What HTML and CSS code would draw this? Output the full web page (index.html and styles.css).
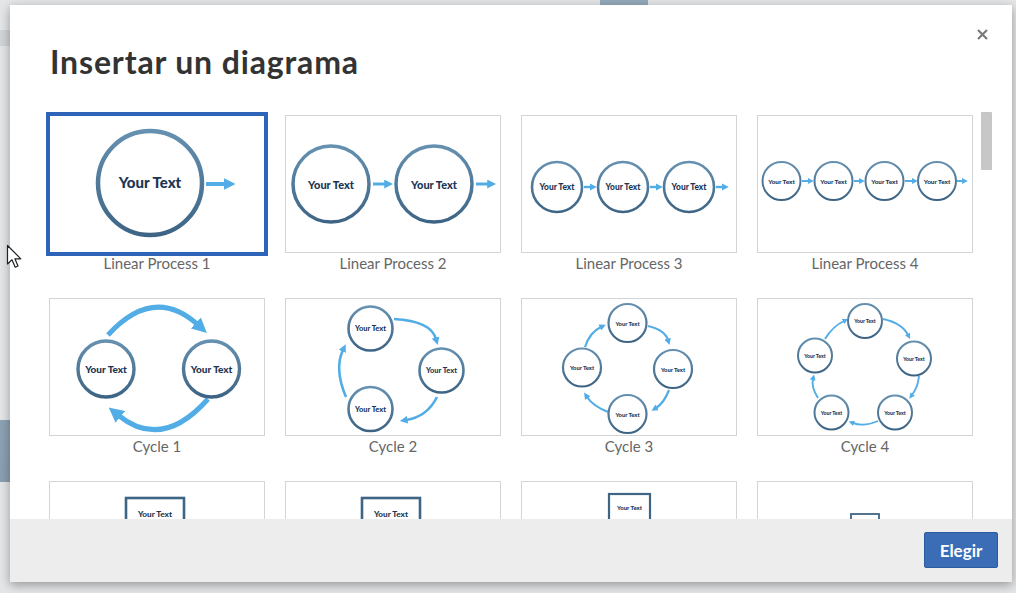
FILE: index.html
```html
<!DOCTYPE html>
<html lang="es">
<head>
    <meta charset="UTF-8">
    <title>Insertar un diagrama</title>
    <link rel="stylesheet" href="styles.css">
</head>
<body>
    <svg class="svg-defs" aria-hidden="true">
        <defs>
            <marker id="head" viewBox="0 0 10 10" refX="2" refY="5" markerWidth="3" markerHeight="3" orient="auto">
                <path d="M0,0 L10,5 L0,10 z" fill="#52ade6"/>
            </marker>
            <linearGradient id="ring" x1="0" y1="0" x2="0" y2="1">
                <stop offset="0" stop-color="#6590b0"/>
                <stop offset="1" stop-color="#3d6484"/>
            </linearGradient>
        </defs>
    </svg>

    <div class="modal">
        <header class="modal-head">
            <h1>Insertar un diagrama</h1>
            <button class="close" aria-label="Cerrar">
                <svg width="11" height="11" viewBox="0 0 11 11"><path d="M1 1 L10 10 M10 1 L1 10" stroke="#7a7a7a" stroke-width="2.2"/></svg>
            </button>
        </header>

        <div class="modal-body">
            <div class="grid">
                <!-- row 1: linear -->
                <div class="item">
                    <div class="thumb selected">
                        <svg viewBox="0 0 214 136" class="lp1">
                            <circle cx="100" cy="67" r="52" stroke-width="4.5"/>
                            <text x="100" y="66" font-size="15">Your Text</text>
                            <line x1="156" y1="68" x2="176" y2="68" stroke-width="4"/>
                        </svg>
                    </div>
                    <div class="label">Linear Process 1</div>
                </div>
                <div class="item">
                    <div class="thumb">
                        <svg viewBox="0 0 214 136">
                            <circle cx="45" cy="68" r="38" stroke-width="3.5"/>
                            <circle cx="148" cy="68" r="38" stroke-width="3.5"/>
                            <text x="45" y="68" font-size="11">Your Text</text>
                            <text x="148" y="68" font-size="11">Your Text</text>
                            <line x1="87" y1="68" x2="100" y2="68" stroke-width="3"/>
                            <line x1="190" y1="68" x2="203" y2="68" stroke-width="3"/>
                        </svg>
                    </div>
                    <div class="label">Linear Process 2</div>
                </div>
                <div class="item">
                    <div class="thumb">
                        <svg viewBox="0 0 214 136">
                            <circle cx="35" cy="71" r="25" stroke-width="2.6"/>
                            <circle cx="101" cy="71" r="25" stroke-width="2.6"/>
                            <circle cx="167" cy="71" r="25" stroke-width="2.6"/>
                            <text x="35" y="71" font-size="8.4">Your Text</text>
                            <text x="101" y="71" font-size="8.4">Your Text</text>
                            <text x="167" y="71" font-size="8.4">Your Text</text>
                            <line x1="62" y1="71" x2="69" y2="71" stroke-width="2.4"/>
                            <line x1="128" y1="71" x2="135" y2="71" stroke-width="2.4"/>
                            <line x1="194" y1="71" x2="201" y2="71" stroke-width="2.4"/>
                        </svg>
                    </div>
                    <div class="label">Linear Process 3</div>
                </div>
                <div class="item">
                    <div class="thumb">
                        <svg viewBox="0 0 214 136">
                            <circle cx="23.5" cy="65" r="19" stroke-width="2"/>
                            <circle cx="75.5" cy="65" r="19" stroke-width="2"/>
                            <circle cx="126.5" cy="65" r="19" stroke-width="2"/>
                            <circle cx="179" cy="65" r="19" stroke-width="2"/>
                            <text x="23.5" y="65" font-size="6.4">Your Text</text>
                            <text x="75.5" y="65" font-size="6.4">Your Text</text>
                            <text x="126.5" y="65" font-size="6.4">Your Text</text>
                            <text x="179" y="65" font-size="6.4">Your Text</text>
                            <line x1="44" y1="65" x2="51" y2="65" stroke-width="2"/>
                            <line x1="96" y1="65" x2="102" y2="65" stroke-width="2"/>
                            <line x1="147" y1="65" x2="155" y2="65" stroke-width="2"/>
                            <line x1="199" y1="65" x2="205" y2="65" stroke-width="2"/>
                        </svg>
                    </div>
                    <div class="label">Linear Process 4</div>
                </div>

                <!-- row 2: cycles -->
                <div class="item">
                    <div class="thumb">
                        <svg viewBox="0 0 214 136">
                            <path class="arc" d="M58 36 Q104 -14 148 26" stroke-width="5"/>
                            <path class="arc" d="M158 100 Q112 152 68 116" stroke-width="5"/>
                            <circle cx="56" cy="70" r="28" stroke-width="3.4"/>
                            <circle cx="161.5" cy="70" r="28" stroke-width="3.4"/>
                            <text x="56" y="70" font-size="10">Your Text</text>
                            <text x="161.5" y="70" font-size="10">Your Text</text>
                        </svg>
                    </div>
                    <div class="label">Cycle 1</div>
                </div>
                <div class="item">
                    <div class="thumb">
                        <svg viewBox="0 0 214 136">
                            <path class="arc" d="M108 20 Q145 22 150 40" stroke-width="2.6"/>
                            <path class="arc" d="M151 98 Q141 118 120 121" stroke-width="2.6"/>
                            <path class="arc" d="M60 98 Q48 70 57 51" stroke-width="2.6"/>
                            <circle cx="84.5" cy="29.5" r="22" stroke-width="2.6"/>
                            <circle cx="155.5" cy="71.5" r="22" stroke-width="2.6"/>
                            <circle cx="84.5" cy="110" r="22" stroke-width="2.6"/>
                            <text x="84.5" y="29.5" font-size="7.4">Your Text</text>
                            <text x="155.5" y="71.5" font-size="7.4">Your Text</text>
                            <text x="84.5" y="110" font-size="7.4">Your Text</text>
                        </svg>
                    </div>
                    <div class="label">Cycle 2</div>
                </div>
                <div class="item">
                    <div class="thumb">
                        <svg viewBox="0 0 214 136">
                            <path class="arc" d="M126 27 Q143 31 146 41" stroke-width="2.2"/>
                            <path class="arc" d="M147 91 Q142 104 134 109" stroke-width="2.2"/>
                            <path class="arc" d="M86 113 Q71 107 65 98" stroke-width="2.2"/>
                            <path class="arc" d="M63 48 Q68 33 79 28" stroke-width="2.2"/>
                            <circle cx="105.5" cy="24" r="19" stroke-width="2.2"/>
                            <circle cx="151" cy="70" r="19" stroke-width="2.2"/>
                            <circle cx="105.5" cy="115" r="19" stroke-width="2.2"/>
                            <circle cx="60" cy="68.5" r="19" stroke-width="2.2"/>
                            <text x="105.5" y="24" font-size="5.8">Your Text</text>
                            <text x="151" y="70" font-size="5.8">Your Text</text>
                            <text x="105.5" y="115" font-size="5.8">Your Text</text>
                            <text x="60" y="68.5" font-size="5.8">Your Text</text>
                        </svg>
                    </div>
                    <div class="label">Cycle 3</div>
                </div>
                <div class="item">
                    <div class="thumb">
                        <svg viewBox="0 0 214 136">
                            <path class="arc" d="M125 20 Q144 24 150 36" stroke-width="1.9"/>
                            <path class="arc" d="M161 77 Q160 88 154 96" stroke-width="1.9"/>
                            <path class="arc" d="M120 122 Q106 128 95 124" stroke-width="1.9"/>
                            <path class="arc" d="M60 99 Q53 88 55 80" stroke-width="1.9"/>
                            <path class="arc" d="M67 40 Q75 27 86 22" stroke-width="1.9"/>
                            <circle cx="107" cy="22" r="17" stroke-width="2"/>
                            <circle cx="156" cy="59.5" r="17" stroke-width="2"/>
                            <circle cx="137" cy="113.5" r="17" stroke-width="2"/>
                            <circle cx="73.5" cy="113.5" r="17" stroke-width="2"/>
                            <circle cx="57" cy="56.5" r="17" stroke-width="2"/>
                            <text x="107" y="22" font-size="5.2">Your Text</text>
                            <text x="156" y="59.5" font-size="5.2">Your Text</text>
                            <text x="137" y="113.5" font-size="5.2">Your Text</text>
                            <text x="73.5" y="113.5" font-size="5.2">Your Text</text>
                            <text x="57" y="56.5" font-size="5.2">Your Text</text>
                        </svg>
                    </div>
                    <div class="label">Cycle 4</div>
                </div>

                <!-- row 3: boxes (cut off by footer) -->
                <div class="item">
                    <div class="thumb">
                        <svg viewBox="0 0 214 136">
                            <rect class="box" x="76" y="16" width="58" height="40" stroke-width="2.6"/>
                            <text x="105" y="31.5" font-size="8.2">Your Text</text>
                        </svg>
                    </div>
                </div>
                <div class="item">
                    <div class="thumb">
                        <svg viewBox="0 0 214 136">
                            <rect class="box" x="76" y="16" width="58" height="40" stroke-width="2.6"/>
                            <text x="105" y="31.5" font-size="8.2">Your Text</text>
                        </svg>
                    </div>
                </div>
                <div class="item">
                    <div class="thumb">
                        <svg viewBox="0 0 214 136">
                            <rect class="box" x="87" y="12" width="41" height="30" stroke-width="2.2"/>
                            <text x="107.5" y="25" font-size="6">Your Text</text>
                        </svg>
                    </div>
                </div>
                <div class="item">
                    <div class="thumb">
                        <svg viewBox="0 0 214 136">
                            <rect class="box" x="93" y="32" width="28" height="22" stroke-width="1.8"/>
                        </svg>
                    </div>
                </div>
            </div>
            <div class="scroll-thumb"></div>
        </div>

        <footer class="modal-foot">
            <button class="btn-primary">Elegir</button>
        </footer>
    </div>

    <svg class="cursor" width="18" height="26" viewBox="0 0 18 26">
        <path d="M1.5 1.5 L1.5 20 L6 15.8 L9.2 23.2 L12 22 L8.9 14.8 L14.8 14.8 Z" fill="#fff" stroke="#222" stroke-width="1.2" stroke-linejoin="round"/>
    </svg>
</body>
</html>
```

FILE: styles.css
```css
* {
    box-sizing: border-box;
}
html, body {
    height: 100%;
}
body {
    margin: 0;
    overflow: hidden;
    font-family: Lato, "Open Sans", sans-serif;
    background:
        linear-gradient(#8fa3b6, #8a9fb3) 0 420px / 12px 62px no-repeat,
        linear-gradient(#d2d5d8, #d2d5d8) 0 30px / 12px 16px no-repeat,
        linear-gradient(#95a9bb, #95a9bb) 600px 0 / 48px 6px no-repeat,
        #e4e6e8;
    position: relative;
}
.svg-defs {
    position: absolute;
    width: 0;
    height: 0;
}
.modal {
    margin: 5px 0 0 10px;
    width: 1002px;
    height: 577px;
    background: #fff;
    display: flex;
    flex-direction: column;
    box-shadow: 0 3px 10px rgba(0, 0, 0, 0.35);
}
.modal-head {
    height: 95px;
    flex: none;
    display: flex;
    justify-content: space-between;
    align-items: flex-start;
    padding: 0 24px 0 40px;
}
.modal-head h1 {
    margin: 38px 0 0;
    font-size: 32px;
    line-height: 38px;
    font-weight: 700;
    color: #333;
    letter-spacing: 0.85px;
}
.close {
    margin-top: 24px;
    padding: 0;
    border: none;
    background: none;
    cursor: pointer;
    line-height: 0;
}
.modal-body {
    flex: 1;
    position: relative;
    overflow: hidden;
}
.grid {
    display: grid;
    grid-template-columns: repeat(4, 216px);
    column-gap: 20px;
    row-gap: 25px;
    padding: 15px 0 0 39px;
}
.thumb {
    height: 138px;
    border: 1px solid #d3d4d6;
    background: #fff;
}
.thumb.selected {
    border-color: #2d64b8;
    outline: 3px solid #2d64b8;
}
.thumb svg {
    display: block;
    width: 100%;
    height: 100%;
}
.thumb circle {
    fill: #fff;
    stroke: url(#ring);
}
.thumb text {
    font-family: Lato, sans-serif;
    font-weight: 900;
    fill: #1c3553;
    text-anchor: middle;
    dominant-baseline: central;
}
.thumb line,
.thumb .arc {
    fill: none;
    stroke: #52ade6;
    marker-end: url(#head);
}
.thumb .box {
    fill: #fff;
    stroke: #3f6585;
}
.label {
    margin-top: 0;
    line-height: 20px;
    font-size: 15px;
    color: #666;
    text-align: center;
}
.scroll-thumb {
    position: absolute;
    left: 971px;
    top: 12px;
    width: 11px;
    height: 58px;
    background: #c7c7c7;
    border-radius: 1px;
}
.modal-foot {
    height: 63px;
    flex: none;
    background: #ededee;
    display: flex;
    justify-content: flex-end;
    align-items: flex-start;
    padding: 13px 14px 0 0;
}
.btn-primary {
    width: 74px;
    height: 36px;
    border: 1px solid #2b5b9f;
    border-radius: 2px;
    background: #3a6db5;
    color: #fff;
    font-family: Lato, sans-serif;
    font-weight: 700;
    font-size: 17px;
    cursor: pointer;
}
.cursor {
    position: absolute;
    left: 6px;
    top: 244px;
}
```
